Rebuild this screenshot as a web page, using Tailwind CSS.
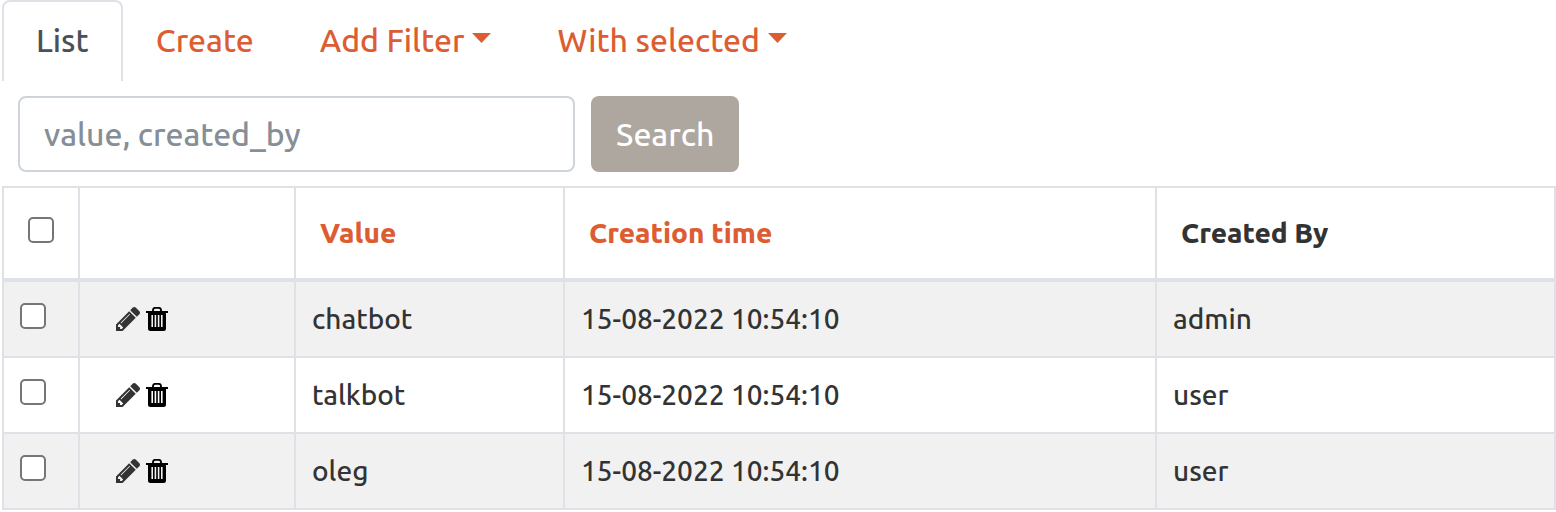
<!DOCTYPE html>
<html lang="en">
<head>
<meta charset="utf-8">
<meta name="viewport" content="width=device-width, initial-scale=1">
<title>List</title>
<script src="https://cdn.jsdelivr.net/npm/@tailwindcss/browser@4"></script>
</head>
<body class="bg-white pl-0.5 font-[Ubuntu,'Noto_Sans',sans-serif] font-medium text-[#333333]">
<svg class="hidden" aria-hidden="true">
  <symbol id="pencil" viewBox="128 149 1515 1515"><path d="M491 1536l91-91-235-235-91 91v107h128v128h107zm523-928q0-22-22-22-10 0-17 7l-542 542q-7 7-7 17 0 22 22 22 10 0 17-7l542-542q7-7 7-17zm-54-192l416 416-832 832h-416v-416zm683 96q0 53-37 90l-166 166-416-416 166-165q36-38 90-38 53 0 91 38l235 234q37 39 37 91z"/></symbol>
  <symbol id="trash" viewBox="0 0 22 24"><path fill-rule="evenodd" d="M6 4Q6 0 9 0h4Q16 0 16 4h6V6h-2v15.500Q20 24 17.500 24h-13Q2 24 2 21.500V6H0V4zM7.800 4h6.400Q14.200 1.800 12.800 1.800H9.200Q7.800 1.800 7.800 4zM5.400 8v12h1.600V8zM8.600 8v12h1.600V8zM11.800 8v12h1.600V8zM15 8v12h1.600V8z"/></symbol>
</svg>

<nav>
  <ul class="flex text-[32px] leading-12 text-[#dd5d33]">
    <li><a href="#" aria-current="page" class="block h-[81px] rounded-t-lg border-x-2 border-t-2 border-[#dee2e6] px-8 pt-3.5 text-[#495057]">List</a></li>
    <li><a href="#" class="block px-[33px] pt-4">Create</a></li>
    <li><button type="button" class="flex items-center px-[33px] pt-4">Add Filter
      <svg class="mb-1 ml-2 h-[10px] w-[19px]" viewBox="0 0 19 10" fill="currentColor" aria-hidden="true"><path d="M0 0h19L9.500 10z"/></svg></button></li>
    <li><button type="button" class="flex items-center px-[33px] pt-4">With selected
      <svg class="mb-1 ml-2 h-[10px] w-[19px]" viewBox="0 0 19 10" fill="currentColor" aria-hidden="true"><path d="M0 0h19L9.500 10z"/></svg></button></li>
  </ul>
</nav>

<form class="flex gap-4 px-4 pt-[15px] pb-[14px] text-[32px]">
  <input type="text" aria-label="Search value, created_by" placeholder="value, created_by" class="h-[76px] w-[557px] rounded-lg border-2 border-[#ced4da] px-6 placeholder:text-[#868e96]">
  <button type="submit" class="h-[76px] rounded-lg bg-[#aea79f] px-[25px] text-white">Search</button>
</form>

<table class="w-full table-fixed border-separate border-spacing-0 border-t-2 border-l-2 border-[#dee2e6] text-left text-[28px] leading-[42px]">
  <colgroup><col class="w-[76px]"><col class="w-[216px]"><col class="w-[269px]"><col class="w-[592px]"><col></colgroup>
  <thead>
    <tr class="h-[94px] [&>*]:border-r-2 [&>*]:border-b-4 [&>*]:border-[#dee2e6] [&>*]:px-6 [&>th]:font-extrabold">
      <th><input type="checkbox" aria-label="Select all records" class="mb-1.5 block size-[26px] appearance-none rounded-[5px] border-2 border-[#767676] bg-white"></th>
      <td></td>
      <th><a href="#" class="text-[#dd5d33]">Value</a></th>
      <th><a href="#" class="text-[#dd5d33]">Creation time</a></th>
      <th>Created By</th>
    </tr>
  </thead>
  <tbody class="[&>tr]:h-[76px] [&>tr:nth-child(odd)]:bg-[#f1f1f1] [&_td]:border-r-2 [&_td]:border-b-2 [&_td]:border-[#dee2e6] [&_td]:px-4">
    <tr>
      <td><input type="checkbox" aria-label="Select chatbot" class="mb-1.5 block size-[26px] appearance-none rounded-[5px] border-2 border-[#767676] bg-white"></td>
      <td><div class="flex gap-1.5 pl-5"><a href="#" aria-label="Edit chatbot"><svg class="size-6 fill-[#333333]"><use href="#pencil"/></svg></a><button type="button" aria-label="Delete chatbot"><svg class="h-6 w-[22px] fill-black"><use href="#trash"/></svg></button></div></td>
      <td>chatbot</td><td>15-08-2022 10:54:10</td><td>admin</td>
    </tr>
    <tr>
      <td><input type="checkbox" aria-label="Select talkbot" class="mb-1.5 block size-[26px] appearance-none rounded-[5px] border-2 border-[#767676] bg-white"></td>
      <td><div class="flex gap-1.5 pl-5"><a href="#" aria-label="Edit talkbot"><svg class="size-6 fill-[#333333]"><use href="#pencil"/></svg></a><button type="button" aria-label="Delete talkbot"><svg class="h-6 w-[22px] fill-black"><use href="#trash"/></svg></button></div></td>
      <td>talkbot</td><td>15-08-2022 10:54:10</td><td>user</td>
    </tr>
    <tr>
      <td><input type="checkbox" aria-label="Select oleg" class="mb-1.5 block size-[26px] appearance-none rounded-[5px] border-2 border-[#767676] bg-white"></td>
      <td><div class="flex gap-1.5 pl-5"><a href="#" aria-label="Edit oleg"><svg class="size-6 fill-[#333333]"><use href="#pencil"/></svg></a><button type="button" aria-label="Delete oleg"><svg class="h-6 w-[22px] fill-black"><use href="#trash"/></svg></button></div></td>
      <td>oleg</td><td>15-08-2022 10:54:10</td><td>user</td>
    </tr>
  </tbody>
</table>
</body>
</html>
